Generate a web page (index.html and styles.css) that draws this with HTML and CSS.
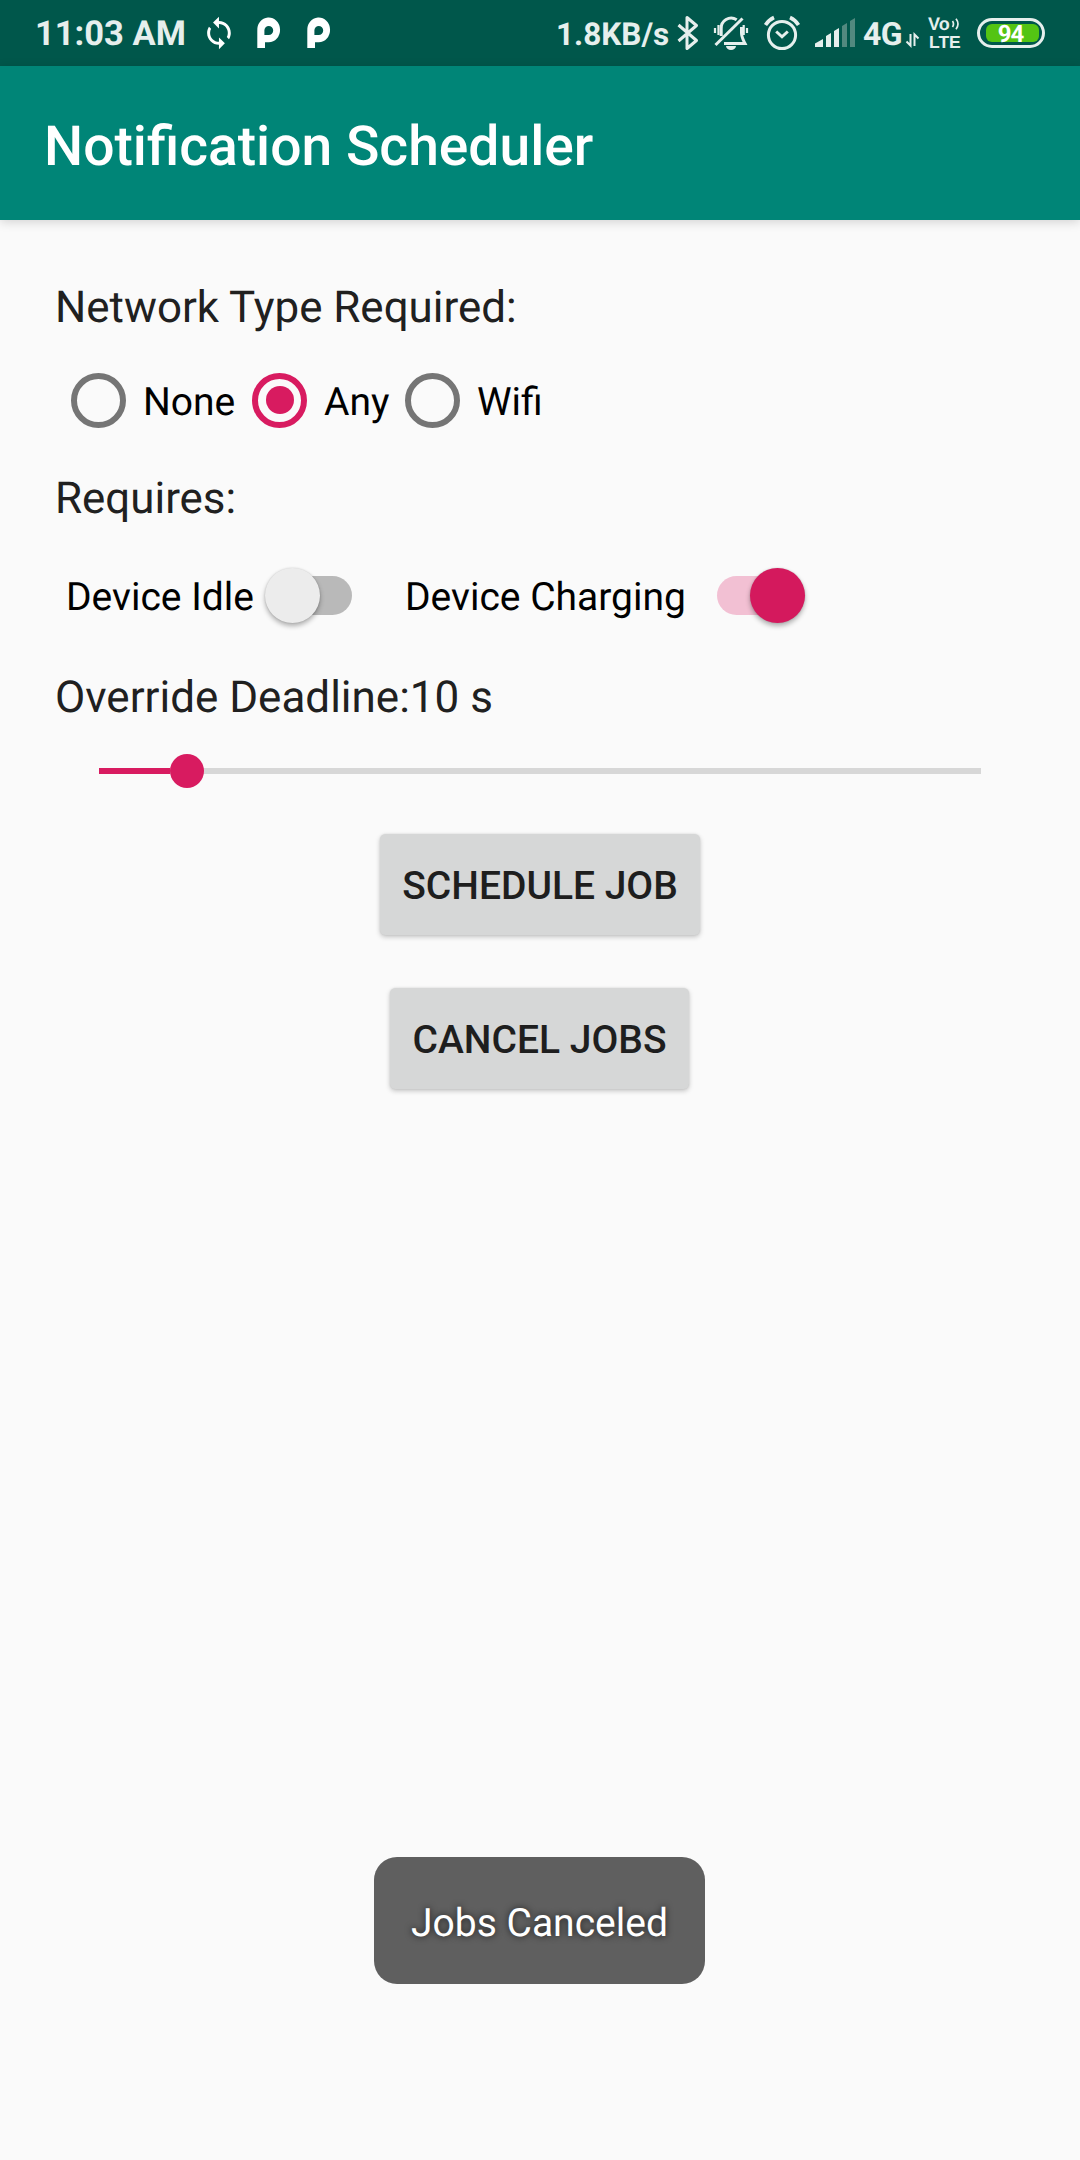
FILE: index.html
```html
<!DOCTYPE html>
<html lang="en">
<head>
<meta charset="utf-8">
<title>Notification Scheduler</title>
<link rel="stylesheet" href="styles.css">
</head>
<body>
<div class="screen">
  <header class="status">
    <span class="clock">11:03 AM</span>
    <svg class="ico sync" viewBox="204 0 30 66"><path transform="translate(201.200 15.200) scale(1.480)" d="M12 4V1L8 5l4 4V6c3.310 0 6 2.690 6 6 0 1.010-.250 1.970-.700 2.800l1.460 1.460C19.540 15.030 20 13.570 20 12c0-4.420-3.580-8-8-8zm0 14c-3.310 0-6-2.690-6-6 0-1.010.250-1.970.700-2.800L5.240 7.740C4.460 8.970 4 10.430 4 12c0 4.420 3.580 8 8 8v3l4-4-4-4v3z" fill="#fff"/></svg>
    <svg class="ico park" viewBox="256 0 26 66"><path fill="#fff" fill-rule="evenodd" d="M257.300 48V31a11.400 12.400 0 1 1 11.400 11.300h-3.700V48zM268.700 26a4.300 4.300 0 0 0-4.300 4.300v4.700h4.300a4.400 4.400 0 0 0 0-9z"/></svg>
    <svg class="ico park park-next" viewBox="256 0 26 66"><path fill="#fff" fill-rule="evenodd" d="M257.300 48V31a11.400 12.400 0 1 1 11.400 11.300h-3.700V48zM268.700 26a4.300 4.300 0 0 0-4.300 4.300v4.700h4.300a4.400 4.400 0 0 0 0-9z"/></svg>
    <span class="speed">1.8KB/s</span>
    <svg class="ico bt" viewBox="676 0 24 66"><path d="M678.500 25l18 15.500-9.500 8V17.500l9.500 8L678.500 41" fill="none" stroke="#e6efed" stroke-width="3" stroke-linejoin="round"/></svg>
    <svg class="ico bell" viewBox="712 0 38 66"><g fill="none" stroke="#e6efed" stroke-width="3"><path d="M721.200 36v-7a10 10 0 0 1 15.500-9.200M741.500 27v6c0 4 1.500 6.500 3.500 10.500h-21"/><path d="M715.500 45L742.500 18.500"/></g><path d="M715 28v5M718.500 25v10M743.700 25v10M747 28v5" stroke="#e6efed" stroke-width="2.200"/><path d="M726 46h10a5 4 0 0 1-10 0z" fill="#e6efed"/></svg>
    <svg class="ico alarm" viewBox="762 0 40 66"><g fill="none" stroke="#e6efed" stroke-width="3"><circle cx="782" cy="35" r="13.600"/><path d="M776.200 31.500l5.800 5.300 5.800-5.300"/><path d="M765.500 25q3-5 8.500-7.500M798.500 25q-3-5-8.500-7.500" stroke-width="3.600"/></g></svg>
    <svg class="ico signal" viewBox="814 0 42 66"><path d="M815 47v-3.500l8-4.500v8zM826 47V36l5-3v14zM834 47V31l5-3v19z" fill="#e6efed"/><path d="M842 47V26l5-3v24zM850 47V21l5-3v29z" fill="#52897f"/></svg>
    <span class="net">4G</span>
    <svg class="ico data" viewBox="905 0 16 66"><path d="M910.500 34v11.500l-4-4M914.500 46V34.500l4 4" fill="none" stroke="#e6efed" stroke-width="2"/></svg>
    <span class="volte"><span class="vo">Vo<svg class="waves" viewBox="0 0 8 12"><path d="M1 3q2 3 0 6M4.500.800q4 5.200 0 10.400" fill="none" stroke="#e6efed" stroke-width="1.700"/></svg></span><span class="lte">LTE</span></span>
    <span class="battery"><span class="charge">94</span></span>
  </header>
  <div class="appbar"><h1 class="title">Notification Scheduler</h1></div>
  <main class="content">
    <h2 class="label">Network Type Required:</h2>
    <div class="radios">
      <label class="radio"><span class="ring"></span><span class="name">None</span></label>
      <label class="radio any"><span class="ring on"></span><span class="name">Any</span></label>
      <label class="radio"><span class="ring"></span><span class="name">Wifi</span></label>
    </div>
    <h2 class="label">Requires:</h2>
    <div class="switches">
      <label class="switch-label idle">Device Idle</label>
      <span class="switch"><span class="thumb"></span></span>
      <label class="switch-label charging">Device Charging</label>
      <span class="switch checked"><span class="thumb"></span></span>
    </div>
    <h2 class="label deadline">Override Deadline:10 s</h2>
    <div class="slider"><span class="fill"></span><span class="knob"></span></div>
    <button class="btn schedule">SCHEDULE JOB</button>
    <button class="btn cancel">CANCEL JOBS</button>
  </main>
  <div class="toast">Jobs Canceled</div>
</div>
</body>
</html>
```
FILE: styles.css
```css
* { box-sizing: border-box; }
body { margin: 0; background: #fafafa; font-family: Roboto, "Noto Sans", sans-serif; text-rendering: geometricPrecision; }
.screen { position: relative; display: flex; flex-direction: column; width: 1080px; height: 2160px; overflow: hidden; }
.status { display: flex; height: 66px; flex: none; background: #00574b; color: #e6efed; font-weight: 700; line-height: 66px; white-space: nowrap; }
.ico { flex: none; height: 66px; }
.clock { width: 204px; padding-left: 35px; font-size: 34.5px; line-height: 69px; }
.sync { width: 30px; }
.park { width: 26px; margin-left: 22px; }
.park-next { margin-left: 24px; }
.speed { width: 120px; margin-left: 224px; font-size: 31.5px; line-height: 69px; }
.bt { width: 24px; }
.bell { width: 38px; margin-left: 12px; }
.alarm { width: 40px; margin-left: 12px; }
.signal { width: 42px; margin-left: 12px; }
.net { width: 42px; margin-left: 7px; font-size: 32px; line-height: 69px; letter-spacing: -0.5px; }
.data { width: 16px; }
.volte { display: flex; flex-direction: column; width: 42px; margin-left: 7px; padding-top: 15px; font-family: "Liberation Sans", sans-serif; font-size: 17.5px; line-height: 18px; }
.vo { display: flex; align-items: center; height: 18px; font-size: 18px; }
.waves { width: 9px; height: 12px; margin-left: 1px; }
.lte { padding-left: 1px; font-size: 17.500px; }
.battery { width: 68px; height: 30px; margin: 18px 0 0 7px; padding: 3px 3px 3px 6px; border: 3px solid #e6efed; border-radius: 15px; }
.charge { display: block; width: 53px; height: 18px; padding-right: 4px; border-radius: 6px; background: #54c413; color: #fff; font-size: 24px; line-height: 20px; letter-spacing: -1px; text-align: center; }
.appbar { position: relative; flex: none; height: 154px; padding: 7px 44px 0; background: #008577; box-shadow: 0 2px 10px rgba(0,0,0,.16); }
.title { margin: 0; color: #fff; font-size: 55.2px; font-weight: 500; line-height: 148px; }
.content { display: flex; flex-direction: column; padding: 61px 55px 0; color: #000; font-size: 39px; }
.label { margin: 0; color: #202020; font-size: 43.9px; font-weight: 400; line-height: 52px; }
.deadline { font-size: 44px; }
.radios { display: flex; height: 88px; margin: 23px 0 28px; }
.radio { display: flex; align-items: center; width: 181px; }
.radio.any { width: 153px; }
.ring { display: grid; place-items: center; flex: none; width: 55px; height: 55px; margin: 0 16.600px 0 16.400px; border: 6px solid #757575; border-radius: 50%; }
.name { padding-top: 4px; line-height: 54px; }
.ring.on { border-color: #d81b60; }
.ring.on::after { content: ""; width: 28px; height: 28px; border-radius: 50%; background: #d81b60; }
.switches { display: flex; align-items: center; height: 88px; margin: 27px 0 32px; padding-left: 11px; }
.switch-label { flex: none; line-height: 56px; padding-top: 4px; }
.idle { width: 199px; }
.charging { width: 305px; margin-left: 53px; }
.switch { display: flex; flex: none; align-items: center; width: 87px; height: 39px; border-radius: 20px; background: linear-gradient(#b9b9b9, #b9b9b9) no-repeat; }
.switch:not(.checked) { border-radius: 0 20px 20px 0; background-position: 28px 0; }
.switch.checked { width: 88px; margin-left: 7px; justify-content: flex-end; background: #f2c0d3; }
.thumb { width: 55px; height: 55px; flex: none; border-radius: 50%; background: #ececec; box-shadow: 0 3px 5px rgba(0,0,0,.3), 0 0 2px rgba(0,0,0,.15); }
.checked .thumb { background: #d4195d; }
.slider { display: flex; align-items: center; height: 34px; margin: 31px 44px 46px; background: linear-gradient(#d7d7d7, #d7d7d7) no-repeat 0 14px / 100% 6px; }
.fill { width: 71px; height: 6px; background: #d81b60; }
.knob { width: 34px; height: 34px; border-radius: 50%; background: #d81b60; }
.btn { display: block; align-self: center; width: 320px; height: 101px; padding: 2px 0 0; border: 0; border-radius: 5.500px; background: #d6d7d7; color: #1e1e1e; font-family: inherit; font-size: 39px; font-weight: 500; white-space: nowrap; box-shadow: 0 2px 5px rgba(0,0,0,.22), 0 0 2px rgba(0,0,0,.1); }
.cancel { width: 299px; margin: 53px 1px 0 0; }
.toast { position: absolute; left: 374px; top: 1857px; width: 331px; height: 127px; border-radius: 23px; background: #5f5f5f; color: #fff; font-size: 39px; line-height: 132px; text-align: center; text-shadow: 0 0 7px rgba(0,0,0,.7); }
```
